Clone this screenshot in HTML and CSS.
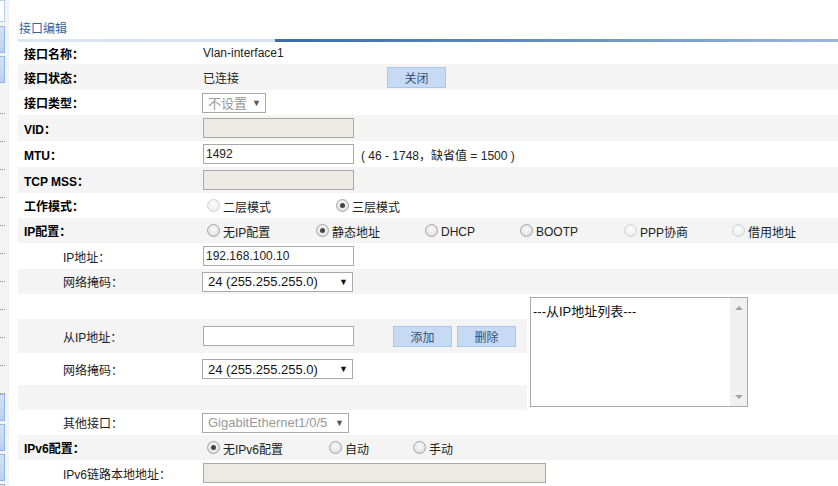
FILE: index.html
```html
<!DOCTYPE html>
<html lang="zh-CN">
<head>
  <meta charset="UTF-8">
  <title>接口编辑</title>
  <link rel="stylesheet" href="styles.css">
</head>
<body>
  <div class="page">
    <div class="side">
      <div class="side-tab first"></div>
      <div class="side-tab"></div>
      <div class="side-tab"></div>
      <div class="side-item"></div>
      <div class="side-item"></div>
      <div class="side-item"></div>
      <div class="side-item"></div>
      <div class="side-item"></div>
      <div class="side-item"></div>
      <div class="side-item"></div>
      <div class="side-item"></div>
      <div class="side-item"></div>
      <div class="side-item"></div>
      <div class="side-item"></div>
      <div class="side-tab"></div>
      <div class="side-tab"></div>
      <div class="side-tab"></div>
      <div class="side-tab"></div>
    </div>

    <div class="main">
      <div class="title">接口编辑</div>
      <div class="title-bar"></div>

      <div class="row h22">
        <div class="label">接口名称：</div>
        <div class="value">Vlan-interface1</div>
      </div>
      <div class="row gray h26">
        <div class="label">接口状态：</div>
        <div class="value status">已连接</div>
        <button class="btn">关闭</button>
      </div>
      <div class="row h25">
        <div class="label">接口类型：</div>
        <div class="value">
          <div class="select disabled small"><span>不设置</span><span class="arrow">▼</span></div>
        </div>
      </div>
      <div class="row gray h26">
        <div class="label">VID：</div>
        <div class="value"><input type="text" class="field" disabled></div>
      </div>
      <div class="row h26">
        <div class="label">MTU：</div>
        <div class="value"><input type="text" class="field" value="1492"></div>
        <div class="hint">( 46 - 1748，缺省值 = 1500 )</div>
      </div>
      <div class="row gray h26">
        <div class="label">TCP MSS：</div>
        <div class="value"><input type="text" class="field" disabled></div>
      </div>
      <div class="row h25">
        <div class="label">工作模式：</div>
        <div class="value opts opts-mode">
          <label class="opt"><span class="radio off"></span>二层模式</label>
          <label class="opt"><span class="radio checked"></span>三层模式</label>
        </div>
      </div>
      <div class="row gray h25">
        <div class="label">IP配置：</div>
        <div class="value opts opts-ip">
          <label class="opt"><span class="radio"></span>无IP配置</label>
          <label class="opt"><span class="radio checked"></span>静态地址</label>
          <label class="opt"><span class="radio"></span>DHCP</label>
          <label class="opt"><span class="radio"></span>BOOTP</label>
          <label class="opt"><span class="radio off"></span>PPP协商</label>
          <label class="opt"><span class="radio off"></span>借用地址</label>
        </div>
      </div>
      <div class="row h26">
        <div class="label sub">IP地址：</div>
        <div class="value"><input type="text" class="field" value="192.168.100.10"></div>
      </div>
      <div class="row gray h25">
        <div class="label sub">网络掩码：</div>
        <div class="value">
          <div class="select"><span>24 (255.255.255.0)</span><span class="arrow">▼</span></div>
        </div>
      </div>

      <div class="sub-ip">
        <div class="sub-left">
          <div class="row h25"></div>
          <div class="row gray h34">
            <div class="label sub">从IP地址：</div>
            <div class="value"><input type="text" class="field"></div>
            <div class="btns">
              <button class="btn">添加</button>
              <button class="btn">删除</button>
            </div>
          </div>
          <div class="row h32">
            <div class="label sub">网络掩码：</div>
            <div class="value">
              <div class="select"><span>24 (255.255.255.0)</span><span class="arrow">▼</span></div>
            </div>
          </div>
          <div class="row gray h25"></div>
        </div>
        <div class="listbox">
          <div class="list-items">---从IP地址列表---</div>
          <div class="scroll">
            <span class="tri up"></span>
            <span class="tri down"></span>
          </div>
        </div>
      </div>

      <div class="row h25">
        <div class="label sub">其他接口：</div>
        <div class="value">
          <div class="select disabled mid"><span>GigabitEthernet1/0/5</span><span class="arrow">▼</span></div>
        </div>
      </div>
      <div class="row gray h25">
        <div class="label">IPv6配置：</div>
        <div class="value opts opts-v6">
          <label class="opt"><span class="radio checked"></span>无IPv6配置</label>
          <label class="opt"><span class="radio"></span>自动</label>
          <label class="opt"><span class="radio"></span>手动</label>
        </div>
      </div>
      <div class="row h26">
        <div class="label sub">IPv6链路本地地址：</div>
        <div class="value"><input type="text" class="field wide" disabled></div>
      </div>
    </div>
  </div>
</body>
</html>
```

FILE: styles.css
```css
body {
  margin: 0;
  font-family: "Liberation Sans", Arial, "Noto Sans CJK SC", sans-serif;
  font-size: 12px;
  color: #222;
  background: #fff;
}
.page {
  display: flex;
  height: 486px;
  overflow: hidden;
}
.side {
  width: 9px;
  flex: none;
  background: #f3f3f3;
  margin-right: 9px;
  display: flex;
  flex-direction: column;
}
.side-tab {
  width: 4px;
  height: 25px;
  flex: none;
  margin-bottom: 3px;
  background: linear-gradient(to bottom, #d3e3f6, #b8d0ee);
  border: 1px solid #8fb6e6;
  border-left: none;
}
.side-tab.first {
  height: 20px;
  margin-bottom: 4px;
  background: #fff;
  border-color: #b6cfee;
}
.side-item {
  width: 5px;
  height: 27px;
  flex: none;
  border-bottom: 1px dotted #8a8a8a;
}
.main {
  flex: 1;
  min-width: 0;
}
.title {
  height: 39px;
  line-height: 20px;
  padding: 19px 0 0 1px;
  box-sizing: border-box;
  color: #3463a2;
}
.title-bar {
  height: 3px;
  background: linear-gradient(to right, #dde6f1 0, #d6e1ee 257px, #3a6ca8 257px, #5e89bb 60%, #9db8d6 100%);
}
.row {
  display: flex;
  align-items: center;
}
.row.gray {
  background: #f4f4f4;
}
.h22 { height: 22px; }
.h25 { height: 25px; }
.h26 { height: 26px; }
.h32 { height: 32px; }
.h34 { height: 34px; }
.label {
  width: 179px;
  flex: none;
  padding-left: 6px;
  font-weight: bold;
  color: #000;
}
.label.sub {
  width: 140px;
  padding-left: 45px;
  font-weight: normal;
  color: #222;
}
.value {
  flex: none;
  display: flex;
  align-items: center;
}
.status {
  width: 184px;
}
.field {
  width: 151px;
  height: 20px;
  box-sizing: border-box;
  border: 1px solid #a9a9a9;
  padding: 0 2px;
  margin: 0;
  font-family: inherit;
  font-size: 12px;
  color: #222;
  background: #fff;
}
.field:disabled {
  background: #ebebe4;
}
.field.wide {
  width: 343px;
}
.hint {
  margin-left: 7px;
  color: #222;
}
.select {
  width: 151px;
  height: 20px;
  box-sizing: border-box;
  border: 1px solid #a9a9a9;
  padding: 0 4px 0 5px;
  margin-left: -1px;
  display: flex;
  align-items: center;
  justify-content: space-between;
  font-size: 13px;
  color: #111;
  background: #fff;
}
.select .arrow {
  font-size: 9px;
  color: #111;
}
.select.disabled {
  color: #999;
}
.select.disabled .arrow {
  color: #555;
}
.select.small {
  width: 64px;
}
.select.mid {
  width: 147px;
}
.btn {
  width: 59px;
  height: 21px;
  padding: 0;
  border: 1px solid #aac6ec;
  background: #c7daf4;
  color: #34507a;
  font-family: inherit;
  font-size: 12px;
}
.btns {
  display: flex;
  gap: 5px;
  margin-left: 39px;
}
.opts {
  display: grid;
  align-items: center;
}
.opts-mode { grid-template-columns: 129px auto; }
.opts-ip { grid-template-columns: 109px 109px 95px 104px 108px auto; }
.opts-v6 { grid-template-columns: 122px 84px auto; }
.opt {
  display: flex;
  align-items: center;
  padding-left: 4px;
  color: #222;
  white-space: nowrap;
  padding-top: 2px;
}
.radio {
  width: 11px;
  height: 11px;
  margin: -3px 3px 0 0;
  border: 1px solid #a4a4a4;
  border-radius: 50%;
  background: radial-gradient(circle at 50% 40%, #fbfbfb 0, #e8e8e8 55%, #d0d0d0 100%);
  position: relative;
}
.radio.off {
  border-color: #d2d2d2;
  background: radial-gradient(circle at 50% 40%, #fdfdfd 0, #f0f0f0 60%, #e2e2e2 100%);
}
.radio.checked::after {
  content: "";
  position: absolute;
  left: 3px;
  top: 3px;
  width: 5px;
  height: 5px;
  border-radius: 50%;
  background: #444;
}
.sub-ip {
  display: flex;
  align-items: flex-start;
}
.sub-left {
  width: 509px;
  flex: none;
}
.listbox {
  width: 218px;
  height: 110px;
  box-sizing: border-box;
  margin: 3px 0 0 3px;
  border: 1px solid #a9a9a9;
  display: flex;
  background: #fff;
}
.list-items {
  flex: 1;
  padding: 3px 2px;
  font-size: 13px;
  color: #111;
}
.scroll {
  width: 17px;
  background: #f0f0f0;
  display: flex;
  flex-direction: column;
  justify-content: space-between;
  align-items: center;
  padding: 8px 0 7px;
}
.tri {
  width: 0;
  height: 0;
  border-left: 4px solid transparent;
  border-right: 4px solid transparent;
}
.tri.up { border-bottom: 4px solid #a3a3a3; }
.tri.down { border-top: 4px solid #a3a3a3; }
```
